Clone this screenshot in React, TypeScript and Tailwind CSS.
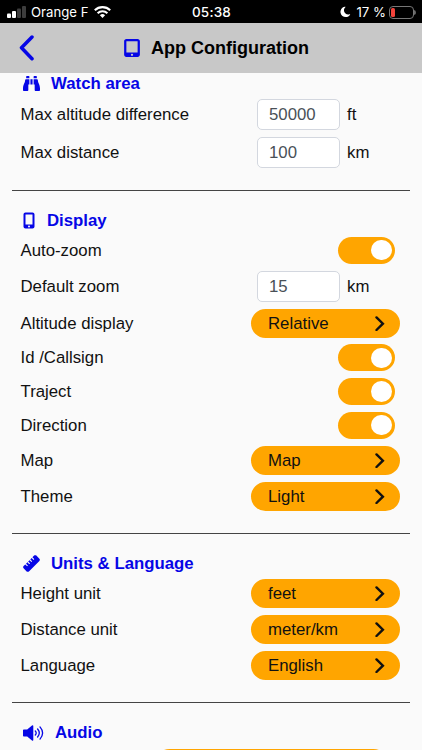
import { ReactNode, useState } from 'react';
import { FaBinoculars } from 'react-icons/fa';
import { FaMobileScreenButton, FaMoon, FaRuler, FaTabletScreenButton } from 'react-icons/fa6';

interface IRowProps {
  label: string;
  className?: string;
  children: ReactNode;
}

function Row({ label, className = 'h-9', children }: IRowProps) {
  return (
    <div className={`flex items-center pl-[20.5px] ${className}`}>
      <span className="flex-1 pt-[2px]">{label}</span>
      {children}
    </div>
  );
}

function NumberRow({ label, initial, unit }: { label: string; initial: string; unit: string }) {
  const [value, setValue] = useState(initial);

  return (
    <Row label={label} className="h-[38px]">
      <div className="flex w-[165px] items-center gap-[7px]">
        <input
          className="h-[31px] w-[83px] rounded-[5px] border border-[#d3d7df] bg-white px-[11px] pt-px text-[#495057]"
          value={value}
          onChange={(e) => setValue(e.target.value)}
        />
        <span className="pt-[2px]">{unit}</span>
      </div>
    </Row>
  );
}

function ToggleRow({ label, className = 'h-[33.7px]' }: { label: string; className?: string }) {
  const [on, setOn] = useState(true);

  return (
    <Row label={label} className={className}>
      <button
        onClick={() => setOn((prev) => !prev)}
        className={`mr-[27px] flex h-[27px] w-[57px] items-center rounded-full px-[3.5px] ${
          on ? 'justify-end bg-[#ffa500]' : 'justify-start bg-gray-300'
        }`}
      >
        <span className="size-[20.5px] rounded-full bg-white" />
      </button>
    </Row>
  );
}

function SelectRow({ label, value }: { label: string; value: string }) {
  return (
    <Row label={label}>
      <button className="mr-[22px] flex h-[29px] w-[149px] items-center justify-between rounded-full bg-[#ffa500] pr-[15px] pl-[17px]">
        <span className="pt-[2px]">{value}</span>
        <svg className="h-[15px] w-[10px]" viewBox="0 0 10 15" fill="none" stroke="#111" strokeWidth="2.4">
          <path d="m1.5 1.4 6.4 6.3-6.4 6.3" strokeLinecap="round" />
        </svg>
      </button>
    </Row>
  );
}

function Heading({ icon, children }: { icon: ReactNode; children: ReactNode }) {
  return (
    <h2 className="flex h-[25px] items-center pl-[23px] font-bold text-[#0606e6]">
      {icon}
      <span className="pt-[2px]">{children}</span>
    </h2>
  );
}

function Divider() {
  return <div className="mx-3 mt-[18.5px] mb-[17px] h-px bg-[#444]" />;
}

function SpeakerIcon() {
  return (
    <svg className="mr-[11px] h-4 w-[21px]" viewBox="0 0 21 16" fill="none" stroke="currentColor" strokeWidth="1.3">
      <path d="M0 5.2q0-.8.8-.8h3.4L9 .6q1.3-.8 1.3.6v13.6q0 1.4-1.3.6l-4.8-3.8H.8q-.8 0-.8-.8Z" fill="currentColor" stroke="none" />
      <path d="M12.3 6q1.8 2 0 4M14.6 4q3.4 4 0 8M17 1.9q5.2 6.1 0 12.2" strokeLinecap="round" />
    </svg>
  );
}

function StatusBar() {
  return (
    <div className="flex h-[23px] shrink-0 items-center bg-black pt-[2px] font-[Inter,'Liberation_Sans',sans-serif] text-[13.2px] text-white">
      <div className="flex flex-1 items-center pl-[7px]">
        <svg className="mr-[5px] h-3 w-[19px]" viewBox="0 0 19 12">
          <rect x="0" y="7.5" width="4" height="4.5" rx="1" fill="#fff" />
          <rect x="5" y="5" width="4" height="7" rx="1" fill="#fff" />
          <rect x="10" y="2.5" width="4" height="9.5" rx="1" fill="#3d3d3d" />
          <rect x="15" y="0" width="4" height="12" rx="1" fill="#3d3d3d" />
        </svg>
        <span>Orange F</span>
        <svg className="ml-[5px] h-3 w-[17px]" viewBox="0 0 17 12" fill="none" stroke="#fff" strokeWidth="2.1">
          <path d="M.8 4.3a11 11 0 0 1 15.4 0" />
          <path d="M3.6 7.2a7 7 0 0 1 9.8 0" />
          <path d="M8.5 12 5.9 9.3a3.8 3.8 0 0 1 5.2 0Z" fill="#fff" stroke="none" />
        </svg>
      </div>
      <span className="text-[13.5px] font-medium tracking-[0.2px]">05:38</span>
      <div className="flex flex-1 items-center justify-end pr-[6px]">
        <FaMoon className="mr-[6px] size-[12px] -rotate-12" />
        <span className="mr-[3px]">17 %</span>
        <svg className="h-[13px] w-[27px]" viewBox="0 0 27 13">
          <rect x=".5" y=".5" width="24" height="12" rx="3.5" fill="none" stroke="#777" />
          <rect x="2" y="2" width="4" height="9" rx="1.5" fill="#f3433b" />
          <path d="M25.7 4.5q1.3 2 0 4Z" fill="#777" stroke="#777" />
        </svg>
      </div>
    </div>
  );
}

export default function App() {
  return (
    <div className="flex h-[750px] w-[422px] flex-col overflow-hidden bg-[#fafafa] font-['Liberation_Sans',Arial,sans-serif] text-[16.8px] leading-none text-[#111]">
      <StatusBar />
      <header className="flex h-[50px] shrink-0 items-center bg-[#c8c8c8]">
        <button className="w-[124px] pl-[19px] text-[#0606e6]">
          <svg className="h-[27px] w-[16px]" viewBox="0 0 16 27" fill="none" stroke="currentColor" strokeWidth="3.5">
            <path d="M13 2 2.5 12.8 13 23.7" strokeLinecap="round" strokeLinejoin="round" />
          </svg>
        </button>
        <FaTabletScreenButton className="mr-[11px] h-[18px] w-[16px] text-[#0606e6]" />
        <h1 className="text-[18px] font-bold text-black">App Configuration</h1>
      </header>
      <main className="-mt-[2.5px] shrink-0">
        <Heading icon={<FaBinoculars className="mr-[11px] size-[17px]" />}>Watch area</Heading>
        <NumberRow label="Max altitude difference" initial="50000" unit="ft" />
        <NumberRow label="Max distance" initial="100" unit="km" />
        <Divider />
        <Heading icon={<FaMobileScreenButton className="mr-3 h-[17px] w-3" />}>Display</Heading>
        <ToggleRow label="Auto-zoom" className="h-[34px]" />
        <NumberRow label="Default zoom" initial="15" unit="km" />
        <SelectRow label="Altitude display" value="Relative" />
        <ToggleRow label="Id /Callsign" />
        <ToggleRow label="Traject" />
        <ToggleRow label="Direction" />
        <SelectRow label="Map" value="Map" />
        <SelectRow label="Theme" value="Light" />
        <Divider />
        <Heading icon={<FaRuler className="mr-[11px] size-[17px]" />}>Units & Language</Heading>
        <SelectRow label="Height unit" value="feet" />
        <SelectRow label="Distance unit" value="meter/km" />
        <SelectRow label="Language" value="English" />
        <Divider />
        <Heading icon={<SpeakerIcon />}>Audio</Heading>
        <div className="mt-[4px] ml-[155px] h-[29px] w-[233px] rounded-full bg-[#ffa500]" />
      </main>
    </div>
  );
}
